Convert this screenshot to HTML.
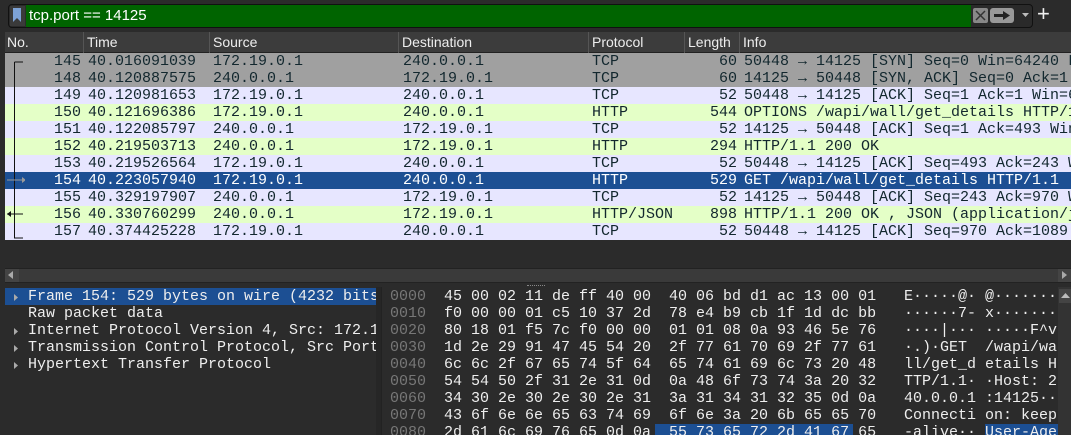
<!DOCTYPE html>
<html><head><meta charset="utf-8"><style>
*{margin:0;padding:0;box-sizing:border-box}
body{width:1071px;height:435px;overflow:hidden;background:#2b2b2b;font-family:"Liberation Mono",monospace;font-size:15px;position:relative}
.abs{position:absolute}
.m{font-family:"Liberation Mono",monospace;font-size:15px;line-height:17px;white-space:pre}
.hdr{position:absolute;top:32px;left:5px;width:1066px;height:21px;background:#3c3c3c;border-bottom:1px solid #222;font-family:"Liberation Sans",sans-serif;font-size:14px;color:#eee;line-height:21px}
.hdr span{position:absolute;top:0;height:21px;border-left:1px solid #555;padding-left:3px}
.row{position:absolute;left:5px;width:1066px;height:17px;color:#12272e}
.row span{position:absolute;top:0}
.g{background:#a0a0a0}.l{background:#e7e6ff}.gr{background:#e4ffc7}.s{background:#1c4f93;color:#fff!important}
.no{left:0;width:76px;text-align:right}
.t{left:83px}.src{left:208px}.dst{left:398px}.pr{left:587px}.len{left:680px;width:52px;text-align:right}.info{left:739px}
.hex span{position:absolute}
</style></head><body>
<!-- filter bar -->
<div class="abs" style="left:8px;top:4px;width:1025px;height:24px;border:1px solid #111;border-radius:4px;background:#2a2a2a"></div>
<div class="abs" style="left:10px;top:6px;width:15px;height:20px;background:#3a3a3a"></div>
<svg class="abs" style="left:13px;top:8px" width="9" height="15"><path d="M0 0H8V14L4 10L0 14Z" fill="#7da2d6"/></svg>
<div class="abs" style="left:26px;top:5px;width:945px;height:22px;background:#006400;color:#fff;font-family:'Liberation Sans',sans-serif;font-size:15px;line-height:22px;padding-left:3px">tcp.port == 14125</div>
<div class="abs" style="left:973px;top:8px;width:15px;height:15px;background:#888;border-radius:2px"></div>
<svg class="abs" style="left:973px;top:8px" width="15" height="15"><path d="M3 3L12 12M12 3L3 12" stroke="#333" stroke-width="1.5"/></svg>
<div class="abs" style="left:990px;top:8px;width:24px;height:15px;background:#999;border-radius:3px"></div>
<svg class="abs" style="left:990px;top:8px" width="24" height="15"><path d="M4 6H13V3L20 7.5L13 12V9H4Z" fill="#222"/></svg>
<svg class="abs" style="left:1022px;top:13px" width="7" height="5"><path d="M0 0H7L3.5 4Z" fill="#bbb"/></svg>
<div class="abs" style="left:1037px;top:2px;color:#eee;font-family:'Liberation Sans',sans-serif;font-size:22px;line-height:24px">+</div>
<!-- header -->
<div class="hdr"><span style="left:-1px;border:none">No.</span><span style="left:78px">Time</span><span style="left:204px">Source</span><span style="left:393px">Destination</span><span style="left:583px">Protocol</span><span style="left:679px">Length</span><span style="left:734px">Info</span></div>
<div class="m">
<div class="row g" style="top:53px"><span class="no">145</span><span class="t">40.016091039</span><span class="src">172.19.0.1</span><span class="dst">240.0.0.1</span><span class="pr">TCP</span><span class="len">60</span><span class="info">50448 → 14125 [SYN] Seq=0 Win=64240 Len=0</span></div>
<div class="row g" style="top:70px"><span class="no">148</span><span class="t">40.120887575</span><span class="src">240.0.0.1</span><span class="dst">172.19.0.1</span><span class="pr">TCP</span><span class="len">60</span><span class="info">14125 → 50448 [SYN, ACK] Seq=0 Ack=1 Win</span></div>
<div class="row l" style="top:87px"><span class="no">149</span><span class="t">40.120981653</span><span class="src">172.19.0.1</span><span class="dst">240.0.0.1</span><span class="pr">TCP</span><span class="len">52</span><span class="info">50448 → 14125 [ACK] Seq=1 Ack=1 Win=64256</span></div>
<div class="row gr" style="top:104px"><span class="no">150</span><span class="t">40.121696386</span><span class="src">172.19.0.1</span><span class="dst">240.0.0.1</span><span class="pr">HTTP</span><span class="len">544</span><span class="info">OPTIONS /wapi/wall/get_details HTTP/1.1</span></div>
<div class="row l" style="top:121px"><span class="no">151</span><span class="t">40.122085797</span><span class="src">240.0.0.1</span><span class="dst">172.19.0.1</span><span class="pr">TCP</span><span class="len">52</span><span class="info">14125 → 50448 [ACK] Seq=1 Ack=493 Win=64</span></div>
<div class="row gr" style="top:138px"><span class="no">152</span><span class="t">40.219503713</span><span class="src">240.0.0.1</span><span class="dst">172.19.0.1</span><span class="pr">HTTP</span><span class="len">294</span><span class="info">HTTP/1.1 200 OK</span></div>
<div class="row l" style="top:155px"><span class="no">153</span><span class="t">40.219526564</span><span class="src">172.19.0.1</span><span class="dst">240.0.0.1</span><span class="pr">TCP</span><span class="len">52</span><span class="info">50448 → 14125 [ACK] Seq=493 Ack=243 Win</span></div>
<div class="row s" style="top:172px"><span class="no">154</span><span class="t">40.223057940</span><span class="src">172.19.0.1</span><span class="dst">240.0.0.1</span><span class="pr">HTTP</span><span class="len">529</span><span class="info">GET /wapi/wall/get_details HTTP/1.1</span></div>
<div class="row l" style="top:189px"><span class="no">155</span><span class="t">40.329197907</span><span class="src">240.0.0.1</span><span class="dst">172.19.0.1</span><span class="pr">TCP</span><span class="len">52</span><span class="info">14125 → 50448 [ACK] Seq=243 Ack=970 Win</span></div>
<div class="row gr" style="top:206px"><span class="no">156</span><span class="t">40.330760299</span><span class="src">240.0.0.1</span><span class="dst">172.19.0.1</span><span class="pr">HTTP/JSON</span><span class="len">898</span><span class="info">HTTP/1.1 200 OK , JSON (application/json</span></div>
<div class="row l" style="top:223px"><span class="no">157</span><span class="t">40.374425228</span><span class="src">172.19.0.1</span><span class="dst">240.0.0.1</span><span class="pr">TCP</span><span class="len">52</span><span class="info">50448 → 14125 [ACK] Seq=970 Ack=1089 Win</span></div>
</div>
<svg class="abs" style="left:5px;top:53px" width="20" height="187"><path d="M9.5 9V185H18M9.5 9H18" stroke="#111" fill="none"/><path d="M2 127H20" stroke="#999"/><path d="M17 124L21 127L17 130Z" fill="#999"/><path d="M2 161H18" stroke="#111"/><path d="M6 158L2 161L6 164Z" fill="#111"/></svg>
<!-- scrollbar -->
<div class="abs" style="left:5px;top:268px;width:1066px;height:15px;background:#3a3a3a;border-top:1px solid #222;border-bottom:1px solid #222"></div>
<div class="abs" style="left:5px;top:269px;width:14px;height:13px;background:#444"></div>
<svg class="abs" style="left:8px;top:271px" width="6" height="9"><path d="M5 0V8L0 4Z" fill="#aaa"/></svg>
<div class="abs" style="left:1058px;top:269px;width:13px;height:13px;background:#444"></div>
<svg class="abs" style="left:1062px;top:271px" width="6" height="9"><path d="M0 0V8L5 4Z" fill="#aaa"/></svg>
<div class="abs" style="left:527px;top:285px;width:18px;height:2px;border-top:1px dotted #888"></div>
<!-- details -->
<div class="abs" style="left:5px;top:287px;width:371px;height:148px;background:#2b2b2b;overflow:hidden;color:#eee" >
<div class="m abs" style="left:0;top:1px;width:371px;height:17px;background:#1c4f93"></div>
<div class="m abs" style="left:23px;top:1px">Frame 154: 529 bytes on wire (4232 bits</div>
<div class="m abs" style="left:23px;top:18px">Raw packet data</div>
<div class="m abs" style="left:23px;top:35px">Internet Protocol Version 4, Src: 172.19.0.1</div>
<div class="m abs" style="left:23px;top:52px">Transmission Control Protocol, Src Port</div>
<div class="m abs" style="left:23px;top:69px">Hypertext Transfer Protocol</div>
<svg class="abs" style="left:9px;top:7px" width="5" height="80"><path d="M0 0L4 3.5L0 7ZM0 34L4 37.5L0 41ZM0 51L4 54.5L0 58ZM0 68L4 71.5L0 75Z" fill="#aaa"/></svg>
</div>
<div class="abs" style="left:376px;top:287px;width:5px;height:148px;background:#262626"></div>
<!-- hex -->
<div class="abs" style="left:381px;top:287px;width:677px;height:148px;background:#2b2b2b;overflow:hidden;border-left:1px solid #222">
<div class="m abs" style="left:8px;top:1px;color:#777">0000
0010
0020
0030
0040
0050
0060
0070
0080</div>
<div class="abs" style="left:273px;top:137px;width:198px;height:17px;background:#1c4f93"></div>
<div class="abs" style="left:603px;top:137px;width:74px;height:17px;background:#1c4f93"></div>
<div class="m abs" style="left:62px;top:1px;color:#eee">45 00 02 11 de ff 40 00  40 06 bd d1 ac 13 00 01
f0 00 00 01 c5 10 37 2d  78 e4 b9 cb 1f 1d dc bb
80 18 01 f5 7c f0 00 00  01 01 08 0a 93 46 5e 76
1d 2e 29 91 47 45 54 20  2f 77 61 70 69 2f 77 61
6c 6c 2f 67 65 74 5f 64  65 74 61 69 6c 73 20 48
54 54 50 2f 31 2e 31 0d  0a 48 6f 73 74 3a 20 32
34 30 2e 30 2e 30 2e 31  3a 31 34 31 32 35 0d 0a
43 6f 6e 6e 65 63 74 69  6f 6e 3a 20 6b 65 65 70
2d 61 6c 69 76 65 0d 0a  55 73 65 72 2d 41 67 65</div>
<div class="m abs" style="left:522px;top:1px;color:#eee">E·····@· @·······
······7- x·······
····|··· ·····F^v
·.)·GET  /wapi/wa
ll/get_d etails H
TTP/1.1· ·Host: 2
40.0.0.1 :14125··
Connecti on: keep
-alive·· User-Age</div>
</div>
<div class="abs" style="left:1058px;top:287px;width:13px;height:148px;background:#333"></div>
<div class="abs" style="left:1059px;top:289px;width:12px;height:14px;background:#444"></div>
<svg class="abs" style="left:1061px;top:293px" width="9" height="5"><path d="M0 5H9L4.5 0Z" fill="#bbb"/></svg>
</body></html>
